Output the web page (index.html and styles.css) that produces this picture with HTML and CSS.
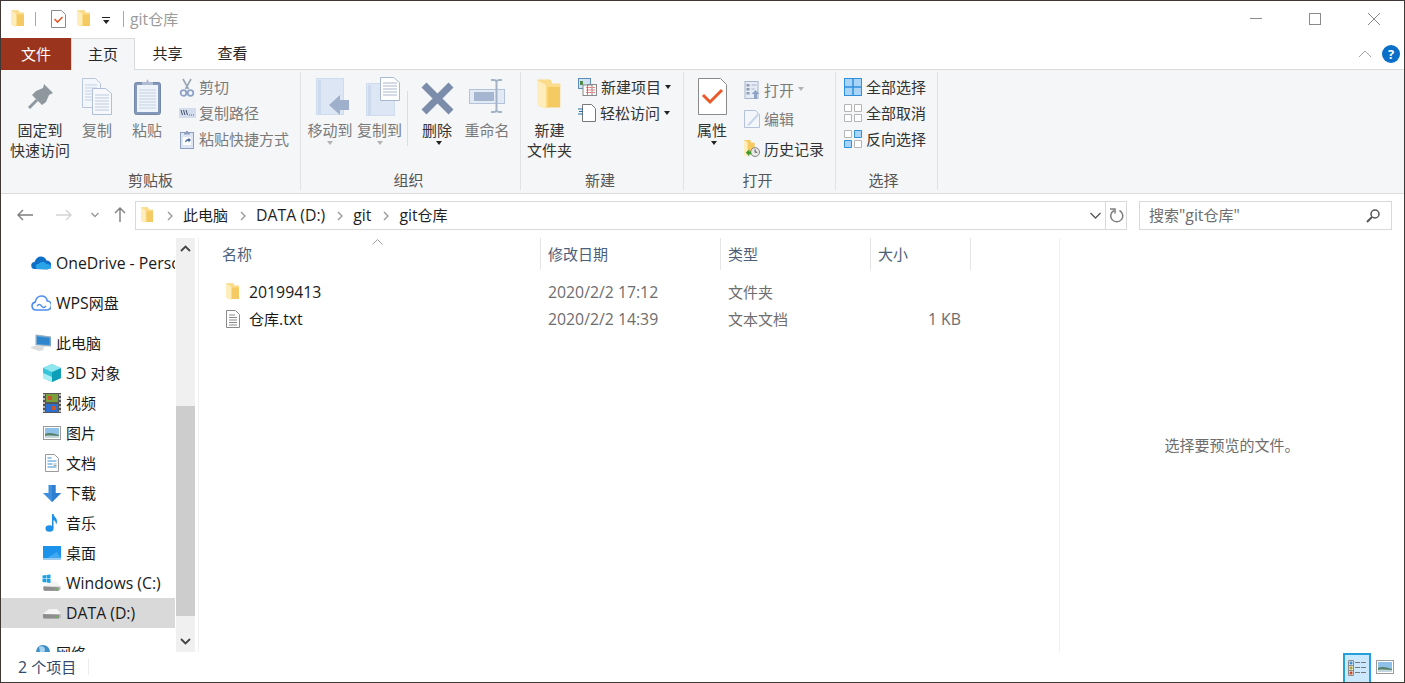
FILE: index.html
```html
<!DOCTYPE html>
<html lang="zh-CN">
<head>
<meta charset="utf-8">
<title>git仓库</title>
<link rel="stylesheet" href="styles.css">
</head>
<body>
<svg class="defs" width="0" height="0" aria-hidden="true">
  <symbol id="folder" viewBox="0 0 14 18">
    <path d="M0 0.5h7.5l1 2.5h4.5v13h-9z" fill="#f6ca62"/>
    <path d="M1 0.5h6.5l.6 2H13v2H6v11H1z" fill="#fbdc8a"/>
    <path d="M0 0.5l5 3v13.5l-5-2.5z" fill="#ffeebb"/>
  </symbol>
  <symbol id="drive" viewBox="0 0 20 12">
    <path d="M1 7l6-5h8l4 5z" fill="#f4f4f4"/>
    <path d="M1 7h18v3.5l-2 1H2l-1-1z" fill="#b9b9b9"/>
    <path d="M1 7l16 1v3.500H2l-1-1z" fill="#8d8d8d"/>
    <rect x="13" y="9" width="3" height="1.500" fill="#5ec04a"/>
  </symbol>
  <symbol id="landscape" viewBox="0 0 18 14">
    <rect x=".5" y=".5" width="17" height="13" fill="#fff" stroke="#9a9a9a"/>
    <rect x="2" y="2" width="14" height="10" fill="#8fc0e8"/>
    <path d="M2 8c4-2 8-1 14 1v3H2z" fill="#56806a"/>
    <path d="M2 10c5-1 9 0 14 0v2H2z" fill="#c3d6dc"/>
  </symbol>
</svg>
<div class="window">
  <header class="titlebar">
    <svg class="qa-folder" width="14" height="18"><use href="#folder"/></svg>
    <span class="qa-sep"></span>
    <svg class="qa-prop" width="15" height="18" viewBox="0 0 15 18"><path d="M.5.500h10l4 4v13H.5z" fill="#fff" stroke="#8a8a8a"/><path d="M3.500 9l3 3 5-5" fill="none" stroke="#e8562a" stroke-width="1.600"/></svg>
    <svg class="qa-folder2" width="14" height="18"><use href="#folder"/></svg>
    <svg class="qa-drop" width="8" height="8" viewBox="0 0 8 8"><path d="M0 0h8v1H0zM1 3h6.500L4.200 7z" fill="#222"/></svg>
    <span class="qa-sep qa-sep2"></span>
    <span class="title"><span class="lat">git</span>仓库</span>
    <div class="winctl">
      <svg width="14" height="14" viewBox="0 0 14 14"><path d="M1 6.500h12" stroke="#8a8a8a" fill="none"/></svg>
      <svg width="14" height="14" viewBox="0 0 14 14"><rect x="1.500" y="1.500" width="11" height="11" fill="none" stroke="#8a8a8a"/></svg>
      <svg width="14" height="14" viewBox="0 0 14 14"><path d="M1 1l12 12M13 1L1 13" stroke="#8a8a8a" fill="none"/></svg>
    </div>
  </header>

  <nav class="tabs">
    <span class="tab tab-file">文件</span>
    <span class="tab tab-active">主页</span>
    <span class="tab">共享</span>
    <span class="tab">查看</span>
    <svg class="collapse" width="14" height="8" viewBox="0 0 14 8"><path d="M1 7l6-6 6 6" fill="none" stroke="#a5a5a5"/></svg>
    <span class="help">?</span>
  </nav>

  <section class="ribbon">
    <div class="group g1">
      <div class="group-body">
        <div class="big w78">
          <div class="big-ico"><svg width="27" height="27" viewBox="0 0 27 27"><path d="M17 1l9 9-4 2-3 7-4 3-10-10 4-4 7-3z" fill="#8f989f"/><path d="M10 17L2 25" stroke="#8f989f" stroke-width="3"/></svg></div>
          <div class="lbl">固定到<br>快速访问</div>
        </div>
        <div class="big w36 dim">
          <div class="big-ico"><svg width="30" height="37" viewBox="0 0 30 37"><path d="M.5.500h13l5 5v24H.5z" fill="#f3f6fb" stroke="#b9c7dd"/><path d="M3 7h12M3 10h12M3 13h12M3 16h12M3 19h12M3 22h12" stroke="#c5d1e4"/><path d="M10.500 10.500h13l6 5v21h-19z" fill="#f6f8fc" stroke="#b0c0d9"/><path d="M13 17h14M13 20h14M13 23h14M13 26h14M13 29h14M13 32h14" stroke="#bccade"/></svg></div>
          <div class="lbl">复制</div>
        </div>
        <div class="big w64 dim">
          <div class="big-ico"><svg width="27" height="37" viewBox="0 0 27 37"><rect x=".5" y="4.500" width="26" height="32" rx="2" fill="#8498b9" stroke="#7488aa"/><rect x="3" y="7" width="21" height="27" fill="#eef2f9"/><path d="M5 12h17M5 15h17M5 18h17M5 21h17M5 24h17M5 27h17M5 30h17" stroke="#c6d1e4"/><path d="M8 7V4h4l1.500-3 1.500 3h4v3z" fill="#aebbd0"/></svg></div>
          <div class="lbl">粘贴</div>
        </div>
        <div class="small-col">
          <div class="row slot20 dim"><svg width="14" height="19" viewBox="0 0 14 19"><path d="M3 1l5.500 10M11 1L5.500 11" stroke="#9aa5b5" stroke-width="1.600" fill="none"/><circle cx="3.500" cy="15" r="2.800" fill="none" stroke="#8ea3c6" stroke-width="1.800"/><circle cx="10.500" cy="15" r="2.800" fill="none" stroke="#8ea3c6" stroke-width="1.800"/></svg><span>剪切</span></div>
          <div class="row slot20 dim"><svg class="ico-path" width="17" height="10" viewBox="0 0 17 10"><rect width="17" height="10" fill="#d3ddee"/><path d="M2 2l1.500 5M4.500 2L6 7M7 2l1.500 5" stroke="#44506a" fill="none"/><path d="M10 7h1M12 7h1M14 7h1" stroke="#5a6680"/></svg><span>复制路径</span></div>
          <div class="row slot20 dim"><svg width="14" height="19" viewBox="0 0 14 19"><rect x=".5" y="2.500" width="13" height="16" fill="#dde5f2" stroke="#8ea0bf"/><path d="M4 2.500h6V4.500H4zM6 1h2v2H6z" fill="#8ea0bf"/><rect x="3" y="7" width="8" height="8" fill="#fff"/><path d="M5 13c0-3 1.500-4 3.500-4V7.500L11 10l-2.500 2.500V11c-1.500 0-2.500.5-3.500 2z" fill="#4d6d9a"/></svg><span>粘贴快捷方式</span></div>
        </div>
      </div>
      <div class="group-label">剪贴板</div>
    </div>

    <div class="group g2">
      <div class="group-body pad4">
        <div class="big w50 dim">
          <div class="big-ico nudge2"><svg width="33" height="37" viewBox="0 0 33 37"><rect x=".5" y=".5" width="27" height="36" fill="#dce6f4" stroke="#cfdcee"/><rect x="2" y="2" width="3" height="34" fill="#cddaed"/><path d="M13 27l11-10v5h9v10h-9v5z" fill="#9fb0cc"/></svg></div>
          <div class="lbl">移动到</div><i class="caret off"></i>
        </div>
        <div class="big w49 dim">
          <div class="big-ico nudge4"><svg width="34" height="39" viewBox="0 0 34 39"><rect x=".5" y="6.500" width="28" height="32" fill="#dce6f4" stroke="#cfdcee"/><rect x="2" y="8" width="3" height="30" fill="#cddaed"/><path d="M14.500.500h13l6 5v18h-19z" fill="#fff" stroke="#aab9d2"/><path d="M17 6h14M17 9h14M17 12h14M17 15h14M17 18h14" stroke="#a9b7cd"/></svg></div>
          <div class="lbl">复制到</div><i class="caret off"></i>
        </div>
        <span class="vsep"></span>
        <div class="big w50">
          <div class="big-ico low"><svg width="33" height="33" viewBox="0 0 33 33"><path d="M3 3l27 27M30 3L3 30" stroke="#7c8cab" stroke-width="7" fill="none"/></svg></div>
          <div class="lbl">删除</div><i class="caret nudge"></i>
        </div>
        <div class="big w50 dim">
          <div class="big-ico"><svg width="36" height="34" viewBox="0 0 36 34"><rect x=".5" y="10.500" width="35" height="14" fill="#e2eaf6" stroke="#b4c3da"/><rect x="5" y="13" width="20" height="9" fill="#a7b6d0"/><path d="M22 1h3c1 0 2 .5 2.500 1.500C28 1.500 29 1 30 1h3M22 33h3c1 0 2-.5 2.500-1.500.5 1 1.500 1.500 2.500 1.500h3M27.500 2v30" stroke="#a5b3c9" stroke-width="2" fill="none"/></svg></div>
          <div class="lbl">重命名</div>
        </div>
      </div>
      <div class="group-label">组织</div>
    </div>

    <div class="group g3">
      <div class="group-body">
        <div class="big w57 newf">
          <div class="big-ico"><svg width="25" height="34"><use href="#folder"/></svg></div>
          <div class="lbl">新建<br>文件夹</div>
        </div>
        <div class="small-col">
          <div class="row slot23"><svg width="19" height="18" viewBox="0 0 19 18"><rect x=".5" y=".5" width="12" height="10" fill="#cfe3f5" stroke="#5b8db8"/><rect x="2" y="3" width="3" height="4" fill="#4b8b44"/><rect x="5" y="7" width="9" height="10.500" fill="#fff" stroke="#888"/><path d="M8 9.500h9M8 12h9M8 14.500h9" stroke="#e28a8a"/><rect x="9.500" y="6.500" width="9" height="11" fill="none" stroke="#8a8a8a"/></svg><span>新建项目</span><i class="caret side"></i></div>
          <div class="row slot23"><svg width="18" height="18" viewBox="0 0 18 18"><path d="M4.500.500h9l4 4v13h-13z" fill="#fff" stroke="#777"/><path d="M0 5h5M1 7.500h4M0 10h5" stroke="#2b6ea8"/></svg><span>轻松访问</span><i class="caret side"></i></div>
        </div>
      </div>
      <div class="group-label">新建</div>
    </div>

    <div class="group g4">
      <div class="group-body">
        <div class="big w56">
          <div class="big-ico"><svg width="29" height="37" viewBox="0 0 29 37"><path d="M.5.500h22l6 6v30H.5z" fill="#fff" stroke="#8a8a8a"/><path d="M5 17l7 7 12-12" fill="none" stroke="#e9592c" stroke-width="3"/></svg></div>
          <div class="lbl">属性</div><i class="caret nudge"></i>
        </div>
        <div class="small-col tall">
          <div class="row slot20 dim"><svg width="15" height="18" viewBox="0 0 15 18"><rect x=".5" y=".5" width="13" height="17" fill="#e6ecf5" stroke="#a7b6cd"/><path d="M2 3h3v2.500H2zM2 7h3v2.500H2zM2 11h3v2.500H2z" fill="#8e9cb3"/><path d="M7 4h5M7 8h3" stroke="#a7b6cd"/><path d="M11 9l4 4h-2.500v5h-3v-5H7z" fill="#8fa4c4"/></svg><span>打开</span><i class="caret side off"></i></div>
          <div class="row slot20 dim"><svg width="16" height="18" viewBox="0 0 16 18"><path d="M.5.500h11l4 4v13H.5z" fill="#f3f6fb" stroke="#b4c3da"/><path d="M4 14L14 3l1 2L6 15l-3 1z" fill="#c9d6ea"/></svg><span>编辑</span></div>
          <div class="row slot20"><svg width="18" height="19" viewBox="0 0 18 19"><path d="M0 0h7l1 3h4v13H0z" fill="#f6ca62"/><path d="M0 0l4 2.500V19l-4-2z" fill="#ffeebb"/><circle cx="12.500" cy="13.500" r="5" fill="#e8e8e8" stroke="#777"/><path d="M12.500 10.500v3.200h2.500" stroke="#444" fill="none"/><path d="M2 14l4-3.500V13h2v3H6v2.500z" fill="#3f9a2d"/></svg><span>历史记录</span></div>
        </div>
      </div>
      <div class="group-label">打开</div>
    </div>

    <div class="group g5">
      <div class="group-body">
        <div class="small-col">
          <div class="row slot22"><svg width="18" height="18" viewBox="0 0 18 18"><rect x=".5" y=".5" width="17" height="17" fill="#a9d3f7" stroke="#2f90dc"/><path d="M9 0v18M0 9h18" stroke="#2f90dc" stroke-width="1.500"/></svg><span>全部选择</span></div>
          <div class="row slot22"><svg width="18" height="18" viewBox="0 0 18 18"><path d="M.5.500h7v7h-7zM10.500.500h7v7h-7zM.5 10.500h7v7h-7zM10.500 10.500h7v7h-7z" fill="#fff" stroke="#b5b5b5"/></svg><span>全部取消</span></div>
          <div class="row slot22"><svg width="18" height="18" viewBox="0 0 18 18"><path d="M.5.500h7v7h-7zM10.500 10.500h7v7h-7z" fill="#fff" stroke="#b5b5b5"/><path d="M10.500.500h7v7h-7zM.5 10.500h7v7h-7z" fill="#a9d3f7" stroke="#2f90dc"/></svg><span>反向选择</span></div>
        </div>
      </div>
      <div class="group-label">选择</div>
    </div>
  </section>

  <section class="addrbar">
    <div class="nav">
      <svg class="n-back" width="16" height="12" viewBox="0 0 16 12"><path d="M6 1L1 6l5 5M1 6h15" fill="none" stroke="#7d7d7d" stroke-width="1.400"/></svg>
      <svg class="n-fwd" width="16" height="12" viewBox="0 0 16 12"><path d="M10 1l5 5-5 5M15 6H0" fill="none" stroke="#d4d4d4" stroke-width="1.400"/></svg>
      <svg class="n-drop" width="8" height="6" viewBox="0 0 8 6"><path d="M.5 1l3.500 3.500L7.500 1" fill="none" stroke="#9a9a9a" stroke-width="1.400"/></svg>
      <svg class="n-up" width="12" height="15" viewBox="0 0 12 15"><path d="M1 6l5-5 5 5M6 1v14" fill="none" stroke="#7d7d7d" stroke-width="1.400"/></svg>
    </div>
    <div class="addr">
      <svg class="addr-folder" width="13" height="17"><use href="#folder"/></svg>
      <svg class="chev first" width="6" height="10" viewBox="0 0 6 10"><path d="M1 1l4 4-4 4" fill="none" stroke="#9a9a9a" stroke-width="1.400"/></svg>
      <span class="crumb">此电脑</span>
      <svg class="chev" width="6" height="10" viewBox="0 0 6 10"><path d="M1 1l4 4-4 4" fill="none" stroke="#9a9a9a" stroke-width="1.400"/></svg>
      <span class="crumb lat">DATA (D:)</span>
      <svg class="chev" width="6" height="10" viewBox="0 0 6 10"><path d="M1 1l4 4-4 4" fill="none" stroke="#9a9a9a" stroke-width="1.400"/></svg>
      <span class="crumb lat">git</span>
      <svg class="chev" width="6" height="10" viewBox="0 0 6 10"><path d="M1 1l4 4-4 4" fill="none" stroke="#9a9a9a" stroke-width="1.400"/></svg>
      <span class="crumb"><span class="lat">git</span>仓库</span>
      <svg class="addr-drop" width="11" height="7" viewBox="0 0 11 7"><path d="M.5 1l5 5 5-5" fill="none" stroke="#555" stroke-width="1.300"/></svg>
      <span class="refresh"><svg width="15" height="16" viewBox="0 0 15 16"><path d="M5 2.500a6 6 0 1 0 5.500 0" fill="none" stroke="#7d7d7d" stroke-width="1.500"/><path d="M1 1h5v4.500" fill="none" stroke="#7d7d7d" stroke-width="1.500"/></svg></span>
    </div>
    <div class="search">
      <span class="search-text">搜索<span class="lat">"git</span>仓库<span class="lat">"</span></span>
      <svg width="14" height="14" viewBox="0 0 14 14"><circle cx="9" cy="5" r="4" fill="none" stroke="#555" stroke-width="1.500"/><path d="M6 8l-5 5" stroke="#555" stroke-width="2"/></svg>
    </div>
  </section>

  <main class="main">
    <aside class="sidebar">
      <div class="side-item top"><svg width="20" height="14" viewBox="0 0 20 14"><path d="M4 13a3.500 3.500 0 0 1-.5-7C4.500 2.500 7 .5 10 .5c2.500 0 4.500 1.500 5.500 4a4.500 4.500 0 0 1 .5 9z" fill="#0f6fc6"/><path d="M7 13a2.500 2.500 0 0 1 .5-5C9 5.500 14 5 15.500 8c2.500-.5 4.500 1 4.500 3 0 1-.5 2-1 2z" fill="#2aa4e8"/></svg><span class="lat">OneDrive - Personal</span></div>
      <div class="side-item top gap"><svg width="20" height="16" viewBox="0 0 20 16"><path d="M5 15a4 4 0 0 1-.8-7.900C5 3.500 7.500 1 10.500 1c3 0 5.300 2.200 5.800 5a4.500 4.500 0 0 1-.8 9z" fill="#fff" stroke="#4f8df0" stroke-width="1.600"/><path d="M6 11c1.500-2 3-2 4.500 0s3 2 4.500 0" fill="none" stroke="#4f8df0" stroke-width="1.400"/></svg><span><span class="lat">WPS</span>网盘</span></div>
      <div class="side-item top gap"><svg width="20" height="18" viewBox="0 0 20 18"><path d="M5 1l15 2v9L5 11z" fill="#5ba7de" stroke="#9ab"/><path d="M6 2.500l12.500 1.500v7L6 10z" fill="#2f86cc"/><path d="M0 13l6-2 9 1-3 2 1 2-5 1-8-3z" fill="#dcdcdc"/></svg><span>此电脑</span></div>
      <div class="side-item"><svg width="18" height="18" viewBox="0 0 18 18"><path d="M9 0l9 4v10l-9 4-9-4V4z" fill="#36c5d8"/><path d="M9 8l9-4v10l-9 4z" fill="#0e9fb8"/><path d="M9 0l9 4-9 4-9-4z" fill="#8fe6ef"/><path d="M0 9l9 4v5l-9-4z" fill="#a8eef3"/></svg><span><span class="lat">3D </span>对象</span></div>
      <div class="side-item"><svg width="18" height="20" viewBox="0 0 18 20"><rect width="18" height="20" fill="#555"/><path d="M1 1v2M1 5v2M1 9v2M1 13v2M1 17v2M17 1v2M17 5v2M17 9v2M17 13v2M17 17v2" stroke="#ddd" stroke-width="1.500"/><rect x="3" y="1" width="12" height="8" fill="#7aa03c"/><rect x="3" y="11" width="12" height="8" fill="#2d6fd0"/><path d="M5 3h4v4H5zM9 13h4v4H9z" fill="#c8552b"/></svg><span>视频</span></div>
      <div class="side-item"><svg width="18" height="14"><use href="#landscape"/></svg><span>图片</span></div>
      <div class="side-item"><svg width="14" height="18" class="shift" viewBox="0 0 14 18"><path d="M.5.500h9l4 4v13H.5z" fill="#fff" stroke="#9a9a9a"/><path d="M2.500 4h4M2.500 7h9M2.500 10h5M2.500 13h9" stroke="#3a8fd0"/><path d="M8.500 10h3M8.500 11.500h3" stroke="#9aa"/></svg><span>文档</span></div>
      <div class="side-item"><svg width="18" height="17" viewBox="0 0 18 17"><path d="M5.500 0h7v8H18l-9 9-9-9h5.500z" fill="#3e8fe0"/><path d="M9 17l9-9h-5.500V0H9z" fill="#2f7fd0"/></svg><span>下载</span></div>
      <div class="side-item"><svg width="18" height="18" viewBox="0 0 18 18"><ellipse cx="6.500" cy="14.500" rx="4" ry="3.200" fill="#1f90e8"/><path d="M9 14V0h1.500c.5 3 3.500 3.500 3.500 7.500 0 1.200-.5 2.300-1 3 .2-2.500-1.500-4-2.500-4.500v8z" fill="#1f90e8"/></svg><span>音乐</span></div>
      <div class="side-item"><svg width="18" height="14" viewBox="0 0 18 14"><rect width="18" height="12.500" fill="#1c93ea"/><path d="M0 12.500h18V14H0z" fill="#9ccdf0"/><path d="M4 12l10-6 4 6z" fill="#3fa9f2"/></svg><span>桌面</span></div>
      <div class="side-item"><svg width="19" height="18" viewBox="0 0 19 18"><use href="#drive" x="0" y="5" width="19" height="13"/><path d="M0 1.500l3.500-.5v3.500H0zM4 1l4-.5v4H4zM0 5h3.500v3.500L0 8zM4 5h4v4l-4-.5z" fill="#19a1e6"/></svg><span class="lat">Windows (C:)</span></div>
      <div class="side-item sel"><svg width="19" height="12"><use href="#drive"/></svg><span class="lat">DATA (D:)</span></div>
      <div class="side-item top gap"><svg width="20" height="20" viewBox="0 0 20 20"><circle cx="12" cy="9" r="7" fill="#3f8fc8"/><path d="M8 4c3-2 6 0 6 3s-3 2-5 2z" fill="#a5d2ec"/><path d="M0 12h8v6H0zM12 12h8v6h-8z" fill="#7fb2dc"/></svg><span>网络</span></div>
    </aside>
    <div class="scroll">
      <div class="sb-btn"><svg width="11" height="7" viewBox="0 0 11 7"><path d="M1 6l4.500-4.500L10 6" fill="none" stroke="#444" stroke-width="1.800"/></svg></div>
      <div class="sb-thumb"></div>
      <div class="sb-btn sb-down"><svg width="11" height="7" viewBox="0 0 11 7"><path d="M1 1l4.500 4.500L10 1" fill="none" stroke="#444" stroke-width="1.800"/></svg></div>
    </div>
    <section class="files">
      <svg class="sort" width="11" height="6" viewBox="0 0 11 6"><path d="M.5 5.500l5-5 5 5" fill="none" stroke="#a0a0a0"/></svg>
      <div class="cols head">
        <div class="h-name">名称</div>
        <div>修改日期</div>
        <div>类型</div>
        <div>大小</div>
      </div>
      <div class="rows">
        <div class="cols file">
          <div class="f-name"><svg width="14" height="18"><use href="#folder"/></svg><span class="lat">20199413</span></div>
          <div class="lat">2020/2/2 17:12</div>
          <div>文件夹</div>
          <div class="f-size"></div>
        </div>
        <div class="cols file">
          <div class="f-name"><svg width="14" height="18" viewBox="0 0 14 18"><path d="M.5.500h9l4 4v13H.5z" fill="#fff" stroke="#8a8a8a"/><path d="M3 5h6M3 7.500h8M3 10h8M3 12.500h8M3 15h8" stroke="#8a8a8a"/></svg><span>仓库<span class="lat">.txt</span></span></div>
          <div class="lat">2020/2/2 14:39</div>
          <div>文本文档</div>
          <div class="f-size lat">1 KB</div>
        </div>
      </div>
    </section>
    <aside class="preview">选择要预览的文件。</aside>
  </main>

  <footer class="status">
    <span class="count"><span class="lat">2&nbsp;</span>个项目</span>
    <div class="views">
      <span class="view on"><svg width="18" height="16" viewBox="0 0 18 16"><path d="M.5.500h5v15h-5z" fill="#fff" stroke="#8a8a8a"/><path d="M.5 5.500h5M.5 10.500h5" stroke="#8a8a8a"/><rect x="1.500" y="1.500" width="3" height="3" fill="#3f8fd0"/><rect x="1.500" y="6.500" width="3" height="3" fill="#a8a030"/><rect x="1.500" y="11.500" width="3" height="3" fill="#c04a2a"/><path d="M7 2.500h5M13 2.500h5M7 7.500h5M13 7.500h5M7 12.500h5M13 12.500h5" stroke="#777" stroke-width="1.200"/></svg></span>
      <span class="view"><svg width="18" height="14"><use href="#landscape"/></svg></span>
    </div>
  </footer>
</div>
</body>
</html>
```
FILE: styles.css
```css
* { box-sizing: border-box; }
html, body { margin: 0; padding: 0; height: 100%; overflow: hidden; }
body {
  font: 15px/20px "Open Sans", "Noto Sans CJK SC", sans-serif;
  color: #1a1a1a;
  background: #fff;
}
svg { display: block; flex: none; }
.defs { position: absolute; }
i { font-style: normal; }
.lat { font-size: 15.800px; }

.window {
  width: 1405px;
  height: 683px;
  display: flex;
  flex-direction: column;
  background: #fff;
  border: 1px solid #3f3835;
  overflow: hidden;
}

/* title bar */
.titlebar { height: 37px; flex: none; display: flex; align-items: center; padding-bottom: 1px; }
.qa-folder { margin-left: 10px; }
.qa-sep { width: 1px; height: 14px; background: #a9a9a9; margin-left: 10px; }
.qa-prop { margin-left: 15px; }
.qa-folder2 { margin-left: 11px; }
.qa-drop { margin-left: 11px; margin-top: 4px; }
.qa-sep2 { margin-left: 13px; height: 16px; }
.title { margin-left: 6px; color: #9b9b9b; }
.winctl { margin-left: auto; display: flex; gap: 45px; padding-right: 23px; }
.winctl svg { width: 14px; }

/* tabs */
.tabs {
  height: 32px;
  flex: none;
  display: flex;
  align-items: stretch;
  border-bottom: 1px solid #dadbdc;
}
.tab { width: 65px; display: flex; align-items: center; justify-content: center; color: #262626; padding-bottom: 1px; }
.tab-file { width: 70px; background: #9a341c; color: #fff; margin-bottom: -1px; }
.tab-active {
  width: 64px;
  background: #f5f6f7;
  border: 1px solid #dadbdc;
  border-bottom: 0;
  margin-bottom: -1px;
}
.collapse { align-self: center; margin-left: auto; margin-right: 10px; }
.help {
  align-self: center;
  width: 18px;
  height: 18px;
  margin-right: 4px;
  border-radius: 50%;
  background: #0a6fc8;
  color: #fff;
  font: bold 13px/18px "Open Sans", sans-serif;
  text-align: center;
}

/* ribbon */
.ribbon {
  height: 124px;
  flex: none;
  display: flex;
  padding-top: 2px;
  padding-bottom: 3px;
  background: #f5f6f7;
  border-bottom: 1px solid #dadbdc;
  color: #333;
}
.group { display: flex; flex-direction: column; border-right: 1px solid #e1e2e3; }
.g1 { width: 300px; }
.g2 { width: 220px; }
.g3 { width: 163px; }
.g4 { width: 152px; }
.g5 { width: 102px; }
.g5 .group-body { padding-left: 8px; }
.group-body { flex: 1; display: flex; min-height: 0; }
.pad4 { padding-left: 4px; }
.group-label { height: 20px; flex: none; text-align: center; color: #555; }
.g2 .group-label, .g3 .group-label, .g4 .group-label { padding-right: 4px; }
.g5 .group-label { padding-right: 6px; }
.big { display: flex; flex-direction: column; align-items: center; flex: none; white-space: nowrap; }
.big-ico { height: 48px; display: flex; align-items: center; justify-content: center; flex: none; }
.low { padding-top: 4px; }
.nudge2 { padding-left: 4px; }
.nudge4 { padding-left: 6px; }
.lbl { text-align: center; line-height: 20px; }
.w78 { width: 78px; }
.w36 { width: 36px; }
.w64 { width: 64px; }
.w50 { width: 50px; }
.w49 { width: 49px; }
.w57 { width: 57px; }
.w56 { width: 56px; margin-right: 4px; }
.dim { color: #7a7a7a; }
.vsep { width: 1px; height: 55px; margin: 19px 4px 0 3px; background: #dcdddf; flex: none; }
.caret {
  width: 0;
  height: 0;
  border-left: 3.500px solid transparent;
  border-right: 3.500px solid transparent;
  border-top: 4px solid #222;
  margin-top: 1px;
}
.caret.nudge { margin-left: 3px; }
.caret.off { border-top-color: #b3b3b3; }
.caret.side { margin-left: 4px; margin-top: -1px; }
.small-col { display: flex; flex-direction: column; padding-top: 2px; white-space: nowrap; }
.small-col.tall { padding-top: 3px; }
.row { height: 26px; display: flex; align-items: center; flex: none; }
.tall .row { height: 29.500px; }
.slot20 > svg { width: 20px; padding-right: 4px; }
.slot20 > svg.ico-path { padding-right: 3px; }
.slot20 > svg, .slot22 > svg, .slot23 > svg { overflow: visible; }
.slot22 > svg { margin-right: 4px; }
.slot23 > svg { margin-right: 4px; }
.newf .big-ico { padding-bottom: 2px; }

/* address bar */
.addrbar { height: 44px; flex: none; display: flex; align-items: center; padding-bottom: 1px; }
.nav { width: 134px; display: flex; align-items: center; flex: none; padding: 0 0 2px 16px; }
.n-fwd { margin-left: 23px; }
.n-drop { margin-left: 19px; }
.n-up { margin-left: 15px; }
.addr {
  width: 992px;
  height: 29px;
  flex: none;
  display: flex;
  align-items: center;
  border: 1px solid #d9d9d9;
}
.addr-folder { margin-left: 5px; }
.chev { margin-left: 12px; }
.chev.first { margin-left: 13px; }
.crumb { margin-left: 10px; margin-top: -2px; color: #1f1f1f; white-space: nowrap; }
.addr-drop { margin-left: auto; margin-right: 4px; }
.refresh {
  width: 21px;
  height: 27px;
  flex: none;
  display: flex;
  align-items: center;
  justify-content: center;
  border-left: 1px solid #d9d9d9;
}
.search {
  width: 253px;
  height: 29px;
  flex: none;
  margin-left: 12px;
  display: flex;
  align-items: center;
  justify-content: space-between;
  padding: 0 11px 0 9px;
  border: 1px solid #d9d9d9;
  color: #6d6d6d;
}
.search-text { margin-top: -2px; }

/* main */
.main { flex: 1; min-height: 0; display: flex; }
.sidebar { width: 174px; flex: none; padding-top: 10px; overflow: hidden; }
.side-item {
  height: 30px;
  display: flex;
  align-items: center;
  white-space: nowrap;
  overflow: hidden;
  padding-left: 41px;
}
.side-item > svg { width: 20px; margin-right: 4px; }
.side-item.top { padding-left: 30px; }
.side-item.top > svg { margin-right: 5px; }
.side-item.gap { margin-top: 10px; }
.side-item.sel { background: #d9d9d9; }
.side-item .shift { width: 18px; margin-right: 6px; padding-left: 2px; }
.scroll {
  width: 19px;
  flex: none;
  margin-left: 1px;
  display: flex;
  flex-direction: column;
  background: #f0f0f0;
}
.sb-btn { height: 20px; flex: none; display: flex; align-items: center; justify-content: center; }
.sb-thumb { height: 210px; margin-top: 148px; background: #cdcdcd; flex: none; }
.sb-down { margin-top: auto; height: 22px; }
.files {
  position: relative;
  width: 860px;
  flex: none;
  margin-left: 4px;
  box-shadow: -1px 0 0 #f0f0f0;
}
.sort { position: absolute; left: 173px; top: 1px; }
.cols { display: grid; grid-template-columns: 342px 180px 150px 100px; }
.head { height: 32px; color: #4c607a; }
.head > div { display: flex; align-items: center; padding-left: 7px; border-right: 1px solid #e5e5e5; }
.head > .h-name { padding-left: 23px; }
.rows { padding-top: 8px; }
.file { height: 27px; align-items: center; color: #6d6d6d; }
.file > div { padding-left: 7px; white-space: nowrap; }
.file > .f-name { display: flex; align-items: center; padding-left: 27px; color: #1a1a1a; }
.f-name svg { margin-right: 9px; }
.file > .f-size { text-align: right; padding: 0 10px 0 0; }
.preview {
  flex: 1;
  min-width: 0;
  display: flex;
  align-items: center;
  justify-content: center;
  border-left: 1px solid #f0f0f0;
  color: #6d6d6d;
}

/* status bar */
.status { height: 30px; flex: none; display: flex; align-items: center; color: #2f4a6d; }
.count { width: 88px; padding-left: 17px; height: 16px; display: flex; align-items: center; border-right: 1px solid #ececec; white-space: nowrap; }
.views { margin-left: auto; height: 100%; display: flex; align-items: center; padding-right: 10px; }
.view { display: flex; align-items: center; justify-content: center; }
.view.on {
  width: 28px;
  height: 29px;
  margin-right: 5px;
  background: #cce8ff;
  border: 2px solid #26a0da;
  border-bottom: 0;
}
```
